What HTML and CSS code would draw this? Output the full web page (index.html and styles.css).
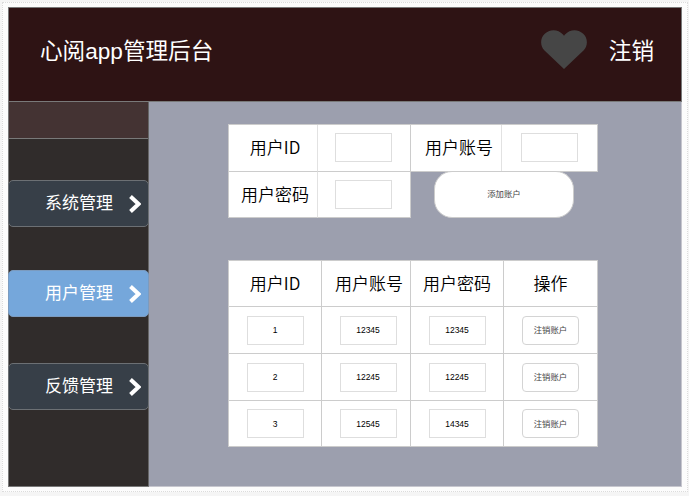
FILE: index.html
```html
<!DOCTYPE html>
<html lang="zh-CN">
<head>
<meta charset="utf-8">
<title>心阅app管理后台</title>
<link rel="stylesheet" href="styles.css">
</head>
<body>
<div class="frame">
<div class="app">
  <header class="header">
    <h1 class="title">心阅app管理后台</h1>
    <svg class="heart" viewBox="0 0 46 39"><path d="M23 39L3.500 20.500C-1 16-1 8.500 3.500 4C8.500-1.200 17-1.200 22 4.500L23 5.700L24 4.500C29-1.200 37.500-1.200 42.500 4C47 8.500 47 16 42.500 20.500Z"/></svg>
    <span class="logout">注销</span>
  </header>
  <div class="body">
    <nav class="sidebar">
      <div class="sidebar-top"></div>
      <a class="nav">系统管理<svg class="chevron" viewBox="0 0 12 18"><path d="M1.500 1.500L9.500 9L1.500 16.500"/></svg></a>
      <a class="nav nav-active">用户管理<svg class="chevron" viewBox="0 0 12 18"><path d="M1.500 1.500L9.500 9L1.500 16.500"/></svg></a>
      <a class="nav nav-last">反馈管理<svg class="chevron" viewBox="0 0 12 18"><path d="M1.500 1.500L9.500 9L1.500 16.500"/></svg></a>
    </nav>
    <main class="main">
      <section class="form">
        <div class="form-row">
          <div class="cell light label">用户ID</div>
          <div class="cell entry"><span class="field"></span></div>
          <div class="cell light shift">用户账号</div>
          <div class="cell"><span class="field"></span></div>
        </div>
        <div class="form-row form-row-last">
          <div class="cell light label">用户密码</div>
          <div class="cell entry"><span class="field"></span></div>
          <button class="add">添加账户</button>
        </div>
      </section>
      <section class="table">
        <div class="cell head">用户ID</div><div class="cell head shift">用户账号</div><div class="cell head">用户密码</div><div class="cell head">操作</div>
        <div class="cell"><span class="field">1</span></div><div class="cell account"><span class="field">12345</span></div><div class="cell"><span class="field">12345</span></div><div class="cell"><button class="field action">注销账户</button></div>
        <div class="cell"><span class="field">2</span></div><div class="cell account"><span class="field">12245</span></div><div class="cell"><span class="field">12245</span></div><div class="cell"><button class="field action">注销账户</button></div>
        <div class="cell"><span class="field">3</span></div><div class="cell account"><span class="field">12545</span></div><div class="cell"><span class="field">14345</span></div><div class="cell"><button class="field action">注销账户</button></div>
      </section>
    </main>
  </div>
</div>
</div>
</body>
</html>
```
FILE: styles.css
```css
* { box-sizing: border-box; }
body {
  margin: 0;
  height: 496px;
  padding: 2px 1px 4px 2px;
  background: #f5f5f5;
  font-family: "Liberation Sans", "Noto Sans CJK SC", sans-serif;
  overflow: hidden;
}
.frame {
  height: 490px;
  padding: 4px 4px 4px 5px;
  border: 1px dotted #dcdcdc;
  background: #fcfcfc;
}
.app {
  width: 674px;
  height: 480px;
  border: 1px solid #797979;
}
.header {
  display: flex;
  align-items: center;
  height: 94px;
  padding: 0 27px 6px 31px;
  border-bottom: 1px solid #797979;
  background: #2e1314;
  color: #fff;
}
.title {
  margin: 0;
  font-size: 22.600px;
  font-weight: 400;
  line-height: 30px;
  white-space: nowrap;
}
.heart {
  width: 46px;
  height: 39px;
  margin: 0 22px 5px auto;
  fill: #464646;
}
.logout { font-size: 22.600px; line-height: 30px; }
.body { display: flex; height: 384px; }
.sidebar {
  width: 140px;
  border-right: 1px solid #666;
  background: #302c2b;
}
.sidebar-top {
  height: 37px;
  margin-bottom: 41px;
  border-bottom: 1px solid #797979;
  background: #443333;
}
.nav {
  display: flex;
  align-items: center;
  justify-content: space-between;
  width: 141px;
  height: 47px;
  margin: 0 0 43px -1px;
  padding: 0 7px 0 36px;
  border: 1px solid #6c7074;
  border-radius: 5px;
  background: #373f48;
  color: #fff;
  font-size: 17px;
  font-weight: 400;
  line-height: 24px;
}
.nav-active {
  margin-bottom: 46px;
  border-color: #7b9bbf;
  background: #75a7db;
}
.nav-last { margin-bottom: 0; }
.chevron {
  width: 12px;
  height: 18px;
  fill: none;
  stroke: #fff;
  stroke-width: 4;
}
.main {
  flex: 1;
  margin: 0 -1px -1px 0;
  padding: 22px 0 0 79px;
  border: solid #c6c6ce;
  border-width: 0 1px 1px 0;
  background: #9c9fae;
}
.form-row {
  display: grid;
  grid-template-columns: 89px 93px 91px 96px;
  width: 370px;
  height: 48px;
  border-left: 1px solid #ccc;
  border-top: 1px solid #ccc;
}
.form-row-last {
  height: 46px;
  border-top: 0;
}
.cell {
  display: flex;
  align-items: center;
  justify-content: center;
  border-right: 1px solid #ccc;
  border-bottom: 1px solid #ccc;
  background: #fff;
  color: #000;
  font-size: 17px;
  font-weight: 350;
  font-family: "Liberation Sans", "Noto Sans CJK SC", sans-serif;
  font-family: "Noto Sans CJK SC", sans-serif;
}
.light {
  padding-bottom: 3px;
  border-right-color: #e2e2e2;
}
.head { padding-bottom: 3px; }
.label { padding-left: 4px; }
.shift { padding-left: 6px; }
.entry { padding-right: 2px; }
.account { padding-left: 4px; }
.field {
  display: flex;
  align-items: center;
  justify-content: center;
  width: 57px;
  height: 29px;
  margin-bottom: 1px;
  padding: 0;
  border: 1px solid #dedede;
  background: #fff;
  color: #000;
  font: 8.500px "Liberation Sans", sans-serif;
}
.add {
  width: 140px;
  height: 47px;
  margin: -1px 0 0 23px;
  padding: 0 0 3px;
  border: 1px solid #ccc;
  border-radius: 18px;
  background: #fff;
  color: #444;
  font: 8.400px "Noto Sans CJK SC", sans-serif;
}
.table {
  display: grid;
  grid-template-columns: 93px 89px 93px 94px;
  grid-template-rows: 46px 47px 47px 46px;
  width: 370px;
  margin-top: 42px;
  border-left: 1px solid #ccc;
  border-top: 1px solid #ccc;
}
.table .field { margin-bottom: 0; }
.table .action {
  padding-bottom: 2px;
  border-radius: 4px;
  border-color: #d4d4d4;
  color: #444;
  font: 8.400px "Noto Sans CJK SC", sans-serif;
}
```
